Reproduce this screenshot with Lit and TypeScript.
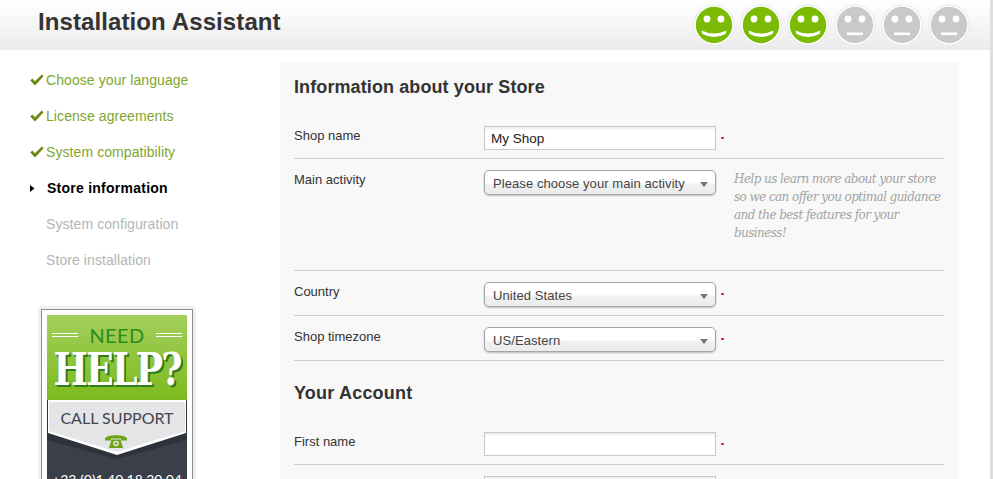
import { LitElement, html, css, svg } from "lit";
import { customElement } from "lit/decorators.js";

@customElement("app-root")
export class AppRoot extends LitElement {
  static styles = css`
    :host { display: flex; height: 479px; width: 993px; overflow: hidden; font-family: "Liberation Sans", Arial, sans-serif; background: #fff; color: #333; }
    .page { width: 990px; flex: none; }
    .strip { flex: 1; background: #dedede; }
    header { height: 50px; background: linear-gradient(#ffffff, #ebebeb); display: flex; align-items: center; justify-content: space-between; padding: 0 20px 0 38px; box-sizing: border-box; }
    h1 { margin: 0 0 6px; font-size: 24px; line-height: 34px; font-weight: 700; color: #333; letter-spacing: 0.1px; }
    .faces { display: flex; gap: 5px; }
    .faces svg { display: block; width: 42px; height: 42px; }
    .body { display: flex; align-items: flex-start; }
    aside { width: 280px; flex: none; padding-top: 12px; box-sizing: border-box; }
    ul { list-style: none; margin: 0; padding: 0 0 0 30px; }
    li { height: 36px; display: flex; align-items: center; font-size: 14px; color: #80a62e; letter-spacing: 0.08px; }
    li .ic { width: 16px; display: flex; flex: none; }
    li.cur { color: #000; font-weight: 700; letter-spacing: 0.25px; }
    li.cur .ic { width: 17px; }
    li.todo { color: #b5b5b5; padding-left: 16px; }
    .help { margin: 28px 0 0 38px; width: 158px; box-sizing: border-box; background: #f1f1f1; padding: 3px 3px 0; border-radius: 4px 4px 0 0; }
    .help-in { border: 1px solid #8a8c8e; border-bottom: 0; background: #fff; padding: 5px 5px 0; height: 220px; box-sizing: border-box; }
    .green { height: 85px; background: linear-gradient(#a3cf5c, #7dba1e); box-sizing: border-box; padding-top: 8px; text-align: center; overflow: hidden; }
    .need { display: flex; align-items: center; justify-content: center; gap: 11px; font: 400 20px/24px Lato, sans-serif; color: #2e8b1f; letter-spacing: 0.4px; }
    .rule { width: 26px; height: 2px; border-top: 1px solid #fff; border-bottom: 1px solid #fff; }
    .helpq { display: inline-block; font: 700 44px/46px "DejaVu Serif Condensed", "DejaVu Serif", serif; color: #fff; text-shadow: 1px 1px 0 #2f7d1a, 2px 2px 0 #2f7d1a; letter-spacing: -2px; white-space: nowrap; transform: scaleX(0.92); }
    .dark { height: 120px; background: #3a3f4a; position: relative; color: #fff; }
    .ribbon { display: block; }
    .call { position: absolute; left: 0; right: 0; top: 8px; text-align: center; font: 400 16px/20px Lato, sans-serif; color: #42464f; }
    .phone { position: absolute; left: 58px; top: 35px; }
    .num { position: absolute; left: 0; right: 0; top: 71px; text-align: center; font: 400 14px/18px Lato, sans-serif; white-space: nowrap; color: #fff; }
    main { margin-top: 12px; width: 678px; background: #f8f8f8; padding: 0 14px 20px; box-sizing: border-box; height: 450px; }
    h2 { margin: 0; font-size: 18px; line-height: 22px; font-weight: 700; color: #333; padding: 14px 0 17px; letter-spacing: 0.1px; }
    h2.sec { padding-top: 21px; letter-spacing: 0.2px; }
    .row { display: grid; grid-template-columns: 190px 232px 18px auto; border-bottom: 1px solid #cdcdcd; font-size: 13px; padding: 11px 0 8px; }
    .r-main { height: 92px; }
    .row label { color: #333; line-height: 16px; padding-top: 2px; }
    .input { height: 24px; box-sizing: border-box; border: 1px solid #c9c9c9; background: #fff; box-shadow: inset 0 2px 2px #eee; font-size: 13.5px; line-height: 24px; padding-left: 6px; color: #222; }
    .select { height: 25px; box-sizing: border-box; border: 1px solid #a5a5a5; border-radius: 5px; background: linear-gradient(#fff 0, #fff 50%, #f0f0f0 60%, #ececec 100%); box-shadow: 0 1px 2px #bbb; font-size: 13px; padding-left: 8px; color: #444; display: flex; justify-content: space-between; align-items: center; padding-right: 7px; letter-spacing: 0.08px; }
    .select span:first-child { padding-top: 2px; }
    .arrow { width: 0; height: 0; border: 4px solid transparent; border-top: 5px solid #777; border-bottom: 0; margin-top: 3px; }
    .req { width: 3px; height: 2px; background: #e8101a; border-radius: 1px; margin: 11px 0 0 5px; }
    .nr { width: 18px; }
    .hint { font: italic 400 12px/18px "DejaVu Serif", serif; color: #a3a3a3; white-space: nowrap; letter-spacing: -0.58px; }
  `;

  face(ok: boolean) {
    const c = ok ? "#7bbb06" : "#c9c9c9";
    return html`<svg viewBox="0 0 42 42">
      <circle cx="21" cy="21" r="20.6" fill="#e4e4e4"></circle>
      <circle cx="21" cy="21" r="19.8" fill="#fff"></circle>
      <circle cx="21" cy="21" r="18.2" fill="${c}"></circle>
      <circle cx="14" cy="15" r="3.4" fill="#fff"></circle>
      <circle cx="28" cy="15" r="3.4" fill="#fff"></circle>
      ${ok
        ? svg`<path d="M8.5 26.5 Q21 32.5 33.5 26.5 L32.5 30 Q21 36 9.5 30 Z" fill="#fff"></path>`
        : svg`<rect x="13" y="28.5" width="16" height="2.6" fill="#fff"></rect>`}
    </svg>`;
  }

  check() {
    return html`<span class="ic"><svg width="14" height="12" viewBox="0 0 14 12"><path d="M0.3 6.5 L2.2 4.6 L5 7.3 L11.8 0.5 L13.6 2.2 L5 11.6 Z" fill="#6b8a12"></path></svg></span>`;
  }

  row(label: string, ctl: unknown, req = true, hint?: unknown, cls = "") {
    return html`<div class="row ${cls}">
      <label>${label}</label><div>${ctl}</div>
      ${req ? html`<div class="req"></div>` : html`<div class="nr"></div>`}<div class="hint">${hint ?? ""}</div>
    </div>`;
  }

  sel(t: string) {
    return html`<div class="select"><span>${t}</span><span class="arrow"></span></div>`;
  }

  render() {
    return html`
      <div class="page">
        <header>
          <h1>Installation Assistant</h1>
          <div class="faces">${[1, 1, 1, 0, 0, 0].map((o) => this.face(!!o))}</div>
        </header>
        <div class="body">
          <aside>
            <ul>
              <li>${this.check()}Choose your language</li>
              <li>${this.check()}License agreements</li>
              <li>${this.check()}System compatibility</li>
              <li class="cur"><span class="ic"><svg width="5" height="7" viewBox="0 0 5 7"><path d="M0 0 L4.5 3.5 L0 7 Z" fill="#000"></path></svg></span>Store information</li>
              <li class="todo">System configuration</li>
              <li class="todo">Store installation</li>
            </ul>
            <div class="help"><div class="help-in">
              <div class="green">
                <div class="need"><span class="rule"></span>NEED<span class="rule"></span></div>
                <div class="helpq">HELP?</div>
              </div>
              <div class="dark">
                <svg class="ribbon" width="140" height="60" viewBox="0 0 140 60">
                  <path d="M0 0 H140 V40 L70 59 L0 40 Z" fill="#2e323b"></path>
                  <path d="M1 0 H139 V33 L70 55 L1 33 Z" fill="#fff"></path>
                  <path d="M2 2 H138 V31 L70 52 L2 31 Z" fill="#e4e5e6"></path>
                </svg>
                <div class="call">CALL SUPPORT</div>
                <svg class="phone" width="22" height="13" viewBox="0 0 22 13">
                  <path d="M0 3.5 C 2 -1, 20 -1, 22 3.5 L 22 5.5 L16 5.5 L16 3.5 H6 L6 5.5 L0 5.5 Z" fill="#6da313"></path>
                  <path d="M6.5 4.5 H15.5 L18 13 H4 Z" fill="#6da313"></path>
                  <circle cx="11" cy="8.5" r="2.8" fill="#e4e5e6"></circle>
                  <circle cx="11" cy="8.5" r="1.3" fill="#6da313"></circle>
                </svg>
                <div class="num">+33 (0)1.40.18.30.04</div>
              </div>
            </div></div>
          </aside>
          <main>
            <h2>Information about your Store</h2>
            ${this.row("Shop name", html`<div class="input">My Shop</div>`)}
            ${this.row("Main activity", this.sel("Please choose your main activity"), false,
              html`Help us learn more about your store<br>so we can offer you optimal guidance<br>and the best features for your<br>business!`, "r-main")}
            ${this.row("Country", this.sel("United States"))}
            ${this.row("Shop timezone", this.sel("US/Eastern"))}
            <h2 class="sec">Your Account</h2>
            ${this.row("First name", html`<div class="input"></div>`)}
            ${this.row("Last name", html`<div class="input"></div>`)}
          </main>
        </div>
      </div>
      <div class="strip"></div>
    `;
  }
}
